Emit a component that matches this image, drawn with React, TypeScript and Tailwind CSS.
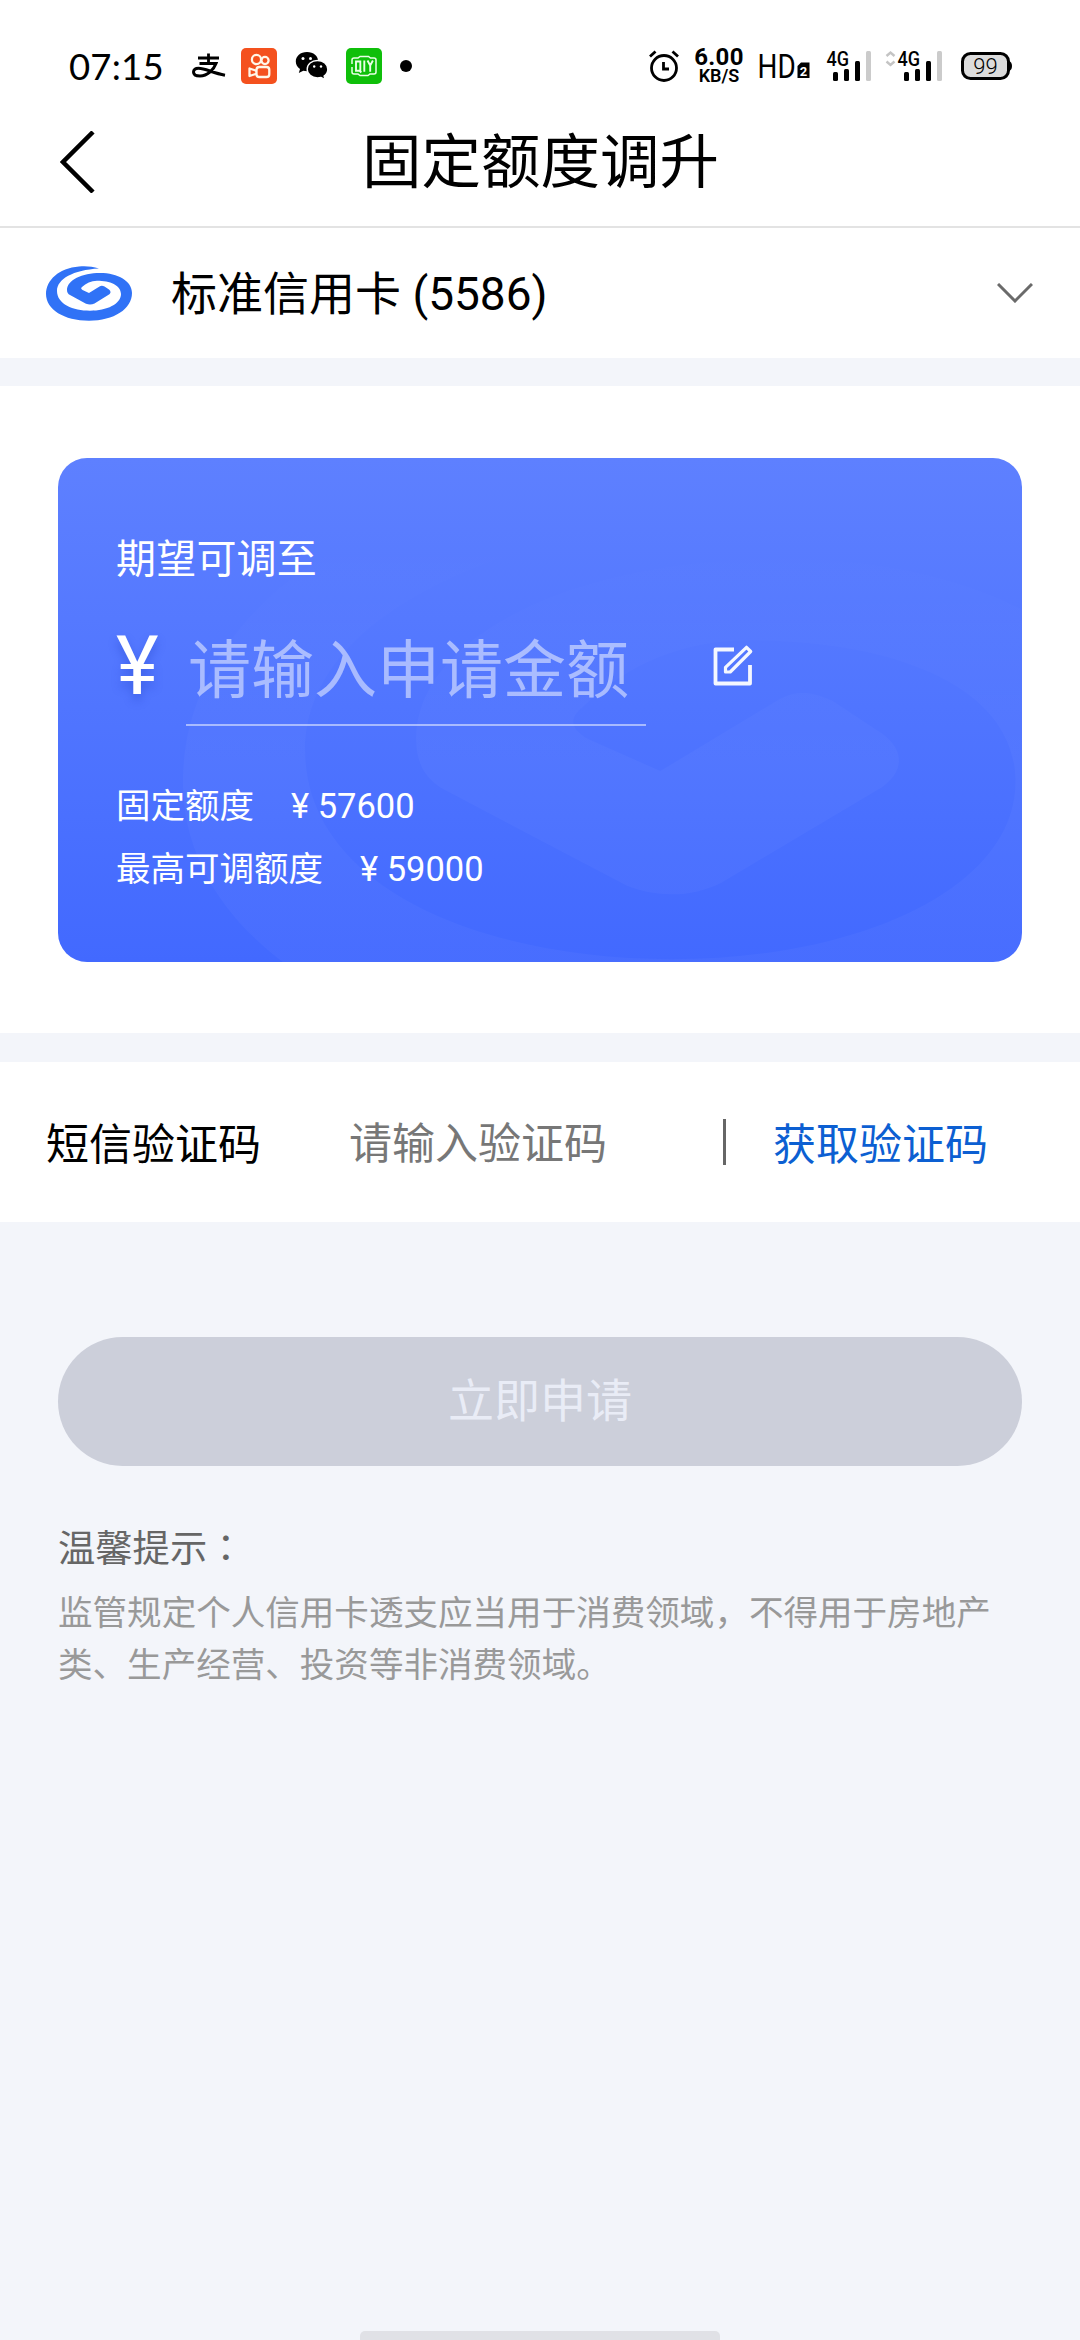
import clsx from "clsx";

const statusFont = "font-['Roboto','Noto_Sans_CJK_SC',sans-serif]";

const swirlPath =
  "M53 2.500C46 .3 40-.2 33 .4 13 2 0 14 0 28c0 15.500 18 26.700 43 26.700S86 43 86 27C86 15 72 7 54 7S21 14 21 24c0 2.500 1 4 3 5l16 8.800c3 1.200 6 1 8.500-.3L63 28.500c2-1.500 2-3.500 0-5l-4.500-3.100c-2-1-3.500-1-5 0L43 27l-6.500-3c-1.700-1-1.700-2-.5-3 4-4 9-6.300 15-6.300 13 0 24 4.300 24 13.300 0 10-14 16.700-31 16.700S11 38 11 25C11 13 27 4 53 2.500z";

function KuaishouIcon() {
  return (
    <svg viewBox="0 0 36 36" className="h-9 w-9">
      <rect width="36" height="36" rx="5" fill="#f4511e" />
      <g fill="none" stroke="#fff6e8" strokeWidth="2.300" strokeLinejoin="round">
        <circle cx="15.500" cy="11.500" r="4.600" />
        <circle cx="24" cy="12.500" r="3.600" />
        <rect x="15.500" y="19" width="12.800" height="10" rx="2.800" />
        <path d="M15.500 22.800 8.500 20.500v7.500l7-2.300" />
      </g>
    </svg>
  );
}

function WechatIcon() {
  return (
    <svg viewBox="0 0 34 30" className="h-[30px] w-[34px]">
      <path d="M12 1C5.400 1 .8 5.200.8 10.500c0 3.200 1.600 5.700 4.200 7.500l-1.200 4 4.500-2.300c1.200.3 2.400.5 3.700.5 6.500 0 11.200-4.300 11.200-9.700S18.500 1 12 1z" fill="#000" />
      <path d="M22.500 9.500c-5.900 0-10.300 3.800-10.300 8.700s4.400 8.700 10.300 8.700c1.300 0 2.500-.2 3.600-.5l4 2.200-1-3.600c2.200-1.600 3.700-4 3.700-6.800 0-4.900-4.500-8.700-10.300-8.700z" fill="#000" stroke="#fff" strokeWidth="1.400" />
      <g fill="#fff">
        <circle cx="8" cy="7.500" r="1.500" />
        <circle cx="15.500" cy="7.500" r="1.500" />
        <circle cx="19.200" cy="15.500" r="1.200" />
        <circle cx="26" cy="15.500" r="1.200" />
      </g>
    </svg>
  );
}

function IqiyiIcon() {
  return (
    <svg viewBox="0 0 36 36" className="h-9 w-9">
      <rect width="36" height="36" rx="5" fill="#0fbf0a" />
      <g fill="none" stroke="#e9ffe6" strokeWidth="1.500">
        <path d="M6 16v-4q0-2 2-2h4l2-1.500h8.500l2 1.500H28q2 0 2 2v12q0 2-2 2h-4l-2 1.500h-8L12 26H8q-2 0-2-2v-5" />
        <path strokeWidth="1.900" d="M10 13.500h4.300v9.300H10zM13 22l2.300 2.500M18.300 12.500v11.300M21.500 12.500l2.700 5 2.700-5M24.200 17.500v6.300" />
      </g>
    </svg>
  );
}

function AlipayIcon() {
  return (
    <svg viewBox="0 0 34 26" className="h-[26px] w-[34px]" fill="none" stroke="#000">
      <path d="M6 5h21M16.500.5v10.500" strokeWidth="2.800" />
      <path d="M7.500 10.500H24c-2.500 6.500-8.500 12.500-16 12.500-4 0-6.500-1.500-6.500-4 0-2.300 2-3.800 5-3.800 7 0 14 4.800 26.500 7" strokeWidth="3" />
    </svg>
  );
}

function AlarmIcon() {
  return (
    <svg viewBox="0 0 30 32" className="h-8 w-[30px]" fill="none" stroke="#000" strokeWidth="2.800">
      <circle cx="15" cy="18" r="12.500" />
      <path d="M14.500 12v7h5.500" strokeWidth="2.800" />
      <path d="m1 6.500 5.500-5M29 6.500l-5.500-5" />
    </svg>
  );
}

function Signal({ arrows }: { arrows?: boolean }) {
  return (
    <svg viewBox="0 0 58 32" className="h-8 w-[58px] overflow-visible">
      {arrows && (
        <path d="m1.500 6 4-3.500 4 3.500M1.500 11.500l4 3.500 4-3.500" fill="none" stroke="#c4c4c4" strokeWidth="2.400" />
      )}
      <text transform="translate(12.500 16) scale(.88 1)" fontSize="20.500" fontWeight="500" fontFamily="Roboto, sans-serif">
        4G
      </text>
      <rect x="19" y="22" width="5" height="9" rx="1.500" />
      <rect x="30" y="19" width="5" height="12" rx="1.500" />
      <rect x="41" y="11" width="5" height="20" rx="1.500" />
      <rect x="52" y="1" width="5" height="30" rx="1.500" fill="#cbcbcb" />
    </svg>
  );
}

function StatusBar() {
  return (
    <div className={clsx("flex h-[108px] items-start text-black", statusFont)}>
      <div className="mt-12 flex h-9 items-center pl-[69px]">
        <span className="w-[95px] text-[36.500px] leading-9 tracking-[0.2px] font-['Lato','Roboto',sans-serif]">07:15</span>
        <div className="ml-[28px] flex items-center">
          <AlipayIcon />
        </div>
        <div className="ml-[15px]">
          <KuaishouIcon />
        </div>
        <div className="ml-[18px]">
          <WechatIcon />
        </div>
        <div className="ml-[17px]">
          <IqiyiIcon />
        </div>
        <div className="ml-[18px] h-3 w-3 rounded-full bg-black" />
      </div>
      <div className="mt-12 ml-auto flex h-9 items-center pr-[67px]">
        <AlarmIcon />
        <div className="ml-4 flex w-12 flex-col items-center">
          <span className="text-[24px] leading-[20px] font-bold tracking-[0.3px]">6.00</span>
          <span className="text-[18px] leading-[18px] font-semibold">KB/S</span>
        </div>
        <svg viewBox="0 0 52 28" className="ml-4 h-7 w-[52px] overflow-visible">
          <text transform="translate(-1.500 26) scale(.82 1)" fontSize="34" fontFamily="Roboto, sans-serif">
            HD
          </text>
          <path d="M38.500 14l3.500-3.500h8.500V26h-12z" />
          <text x="40.800" y="23.500" fontSize="13" fontWeight="700" fill="#fff" fontFamily="Roboto, sans-serif">
            2
          </text>
        </svg>
        <div className="ml-[3px]">
          <Signal />
        </div>
        <div className="ml-[13px]">
          <Signal arrows />
        </div>
        <svg viewBox="0 0 52 28" className="ml-[18px] h-7 w-[52px]">
          <rect x="1.500" y="1.500" width="46" height="25" rx="8" fill="#dcdcdc" stroke="#000" strokeWidth="3" />
          <path d="M48 9q3 1 3 5t-3 5z" />
          <text x="24.500" y="21.500" fontSize="22" textAnchor="middle" fontFamily="Roboto, sans-serif" fontWeight="300">
            99
          </text>
        </svg>
      </div>
    </div>
  );
}

function BankLogo() {
  return (
    <svg viewBox="0 0 86 55" className="h-[55px] w-[86px]">
      <path fill="#3072f6" d={swirlPath} />
    </svg>
  );
}

/* faint brand swirl behind the quota numbers, fading out towards the top */
function CardWatermark() {
  return (
    <svg viewBox="0 0 964 504" className="absolute inset-0 h-full w-full">
      <defs>
        <linearGradient id="swirlFade" x1="0" y1="0" x2="0" y2="1">
          <stop offset="0.08" stopColor="#fff" stopOpacity="0" />
          <stop offset="0.5" stopColor="#fff" stopOpacity="0.03" />
          <stop offset="1" stopColor="#fff" stopOpacity="0.03" />
        </linearGradient>
      </defs>
      <path fill="url(#swirlFade)" transform="translate(125 26) scale(11.1 10.63)" d={swirlPath} />
    </svg>
  );
}

function QuotaCard() {
  return (
    <section className="relative h-[504px] overflow-hidden rounded-[29px] bg-linear-to-b from-[#5e80ff] to-[#4269ff] px-[58px] pt-[74px] text-white">
      <CardWatermark />
      <div className="relative">
        <p className="text-[40px] leading-[56px] tracking-[0.2px]">期望可调至</p>
        <div className="mt-[20px] flex h-[118px] items-start">
          <span className="w-[70px] text-[81px] leading-[118px] [text-shadow:0_6px_10px_rgba(30,60,190,0.35)]">¥</span>
          <div className="flex h-[118px] w-[460px] items-center border-b-2 border-white/50">
            <span className="pt-[9px] pl-[2px] text-[63px] leading-[90px] text-white/50">请输入申请金额</span>
          </div>
          <svg viewBox="0 0 42 42" className="ml-[66px] mt-[37px] h-[42px] w-[42px]" fill="none" stroke="#f4f7ff" strokeWidth="3.800" strokeLinejoin="round">
            <path d="M22 4.500H3.500V38.500H38V20" />
            <path strokeWidth="3.200" d="m34.500 2.300 4.200 4.200-20.500 20.500h-4.700v-4.700z" />
          </svg>
        </div>
        <div className="mt-[56px] flex flex-col gap-[15px] text-[34.500px] leading-[48px]">
          <p className="flex">
            <span className="w-[175px]">固定额度</span>
            <span>¥ 57600</span>
          </p>
          <p className="flex">
            <span className="w-[244px]">最高可调额度</span>
            <span>¥ 59000</span>
          </p>
        </div>
      </div>
    </section>
  );
}

export default function App() {
  return (
    <div className="flex h-[2340px] w-[1080px] flex-col overflow-hidden bg-[#f3f5fa] font-['Roboto','Noto_Sans_CJK_SC',sans-serif] text-black">
      <header className="h-[228px] border-b-2 border-[#e3e3e3] bg-white">
        <StatusBar />
        <div className="flex h-[108px] items-center pl-[60px]">
          <svg viewBox="0 0 36 62" className="h-[62px] w-9" fill="none" stroke="#000" strokeWidth="4.500">
            <path d="M33 1 3 31l30 30" />
          </svg>
          <h1 className="ml-[266px] pt-[1px] text-[59.500px] leading-[84px]">固定额度调升</h1>
        </div>
      </header>

      <div className="flex h-[130px] items-center bg-white pl-[46px] pr-[47px]">
        <BankLogo />
        <span className="ml-[39px] pt-[2px] text-[46px] leading-[64px]">标准信用卡 (5586)</span>
        <svg viewBox="0 0 36 20" className="ml-auto h-5 w-9" fill="none" stroke="#6a6a6a" strokeWidth="3">
          <path d="m1 1 17 17L35 1" />
        </svg>
      </div>

      <main className="mt-7 h-[647px] bg-white px-[58px] pt-[72px]">
        <QuotaCard />
      </main>

      <div className="mt-[29px] flex h-[160px] items-center bg-white pl-[46px] text-[43px] leading-[60px]">
        <span className="w-[303px] pt-[5px]">短信验证码</span>
        <span className="w-[374px] pt-[4px] text-[#777]">请输入验证码</span>
        <span className="h-[46px] w-[3px] bg-[#666]" />
        <span className="ml-[47px] pt-[5px] text-[#0c5fd2]">获取验证码</span>
      </div>

      <div className="px-[58px] pt-[115px]">
        <button className="flex h-[129px] w-full items-center justify-center rounded-full bg-[#cccfda] text-[46px] text-[#e9ecf6]">
          立即申请
        </button>
        <h2 className="mt-[54px] text-[37.300px] leading-[52px] text-[#666]">
          温馨提示<span className="font-['Noto_Sans_CJK_TC',sans-serif]" lang="zh-TW">：</span>
        </h2>
        <p className="mt-[13px] text-[34.550px] leading-[51.500px] text-[#999]">
          监管规定个人信用卡透支应当用于消费领域，不得用于房地产类、生产经营、投资等非消费领域。
        </p>
      </div>

      <div className="mx-auto mt-auto h-[9px] w-[360px] rounded-t-[5px] bg-[#e0e1e6]" />
    </div>
  );
}
